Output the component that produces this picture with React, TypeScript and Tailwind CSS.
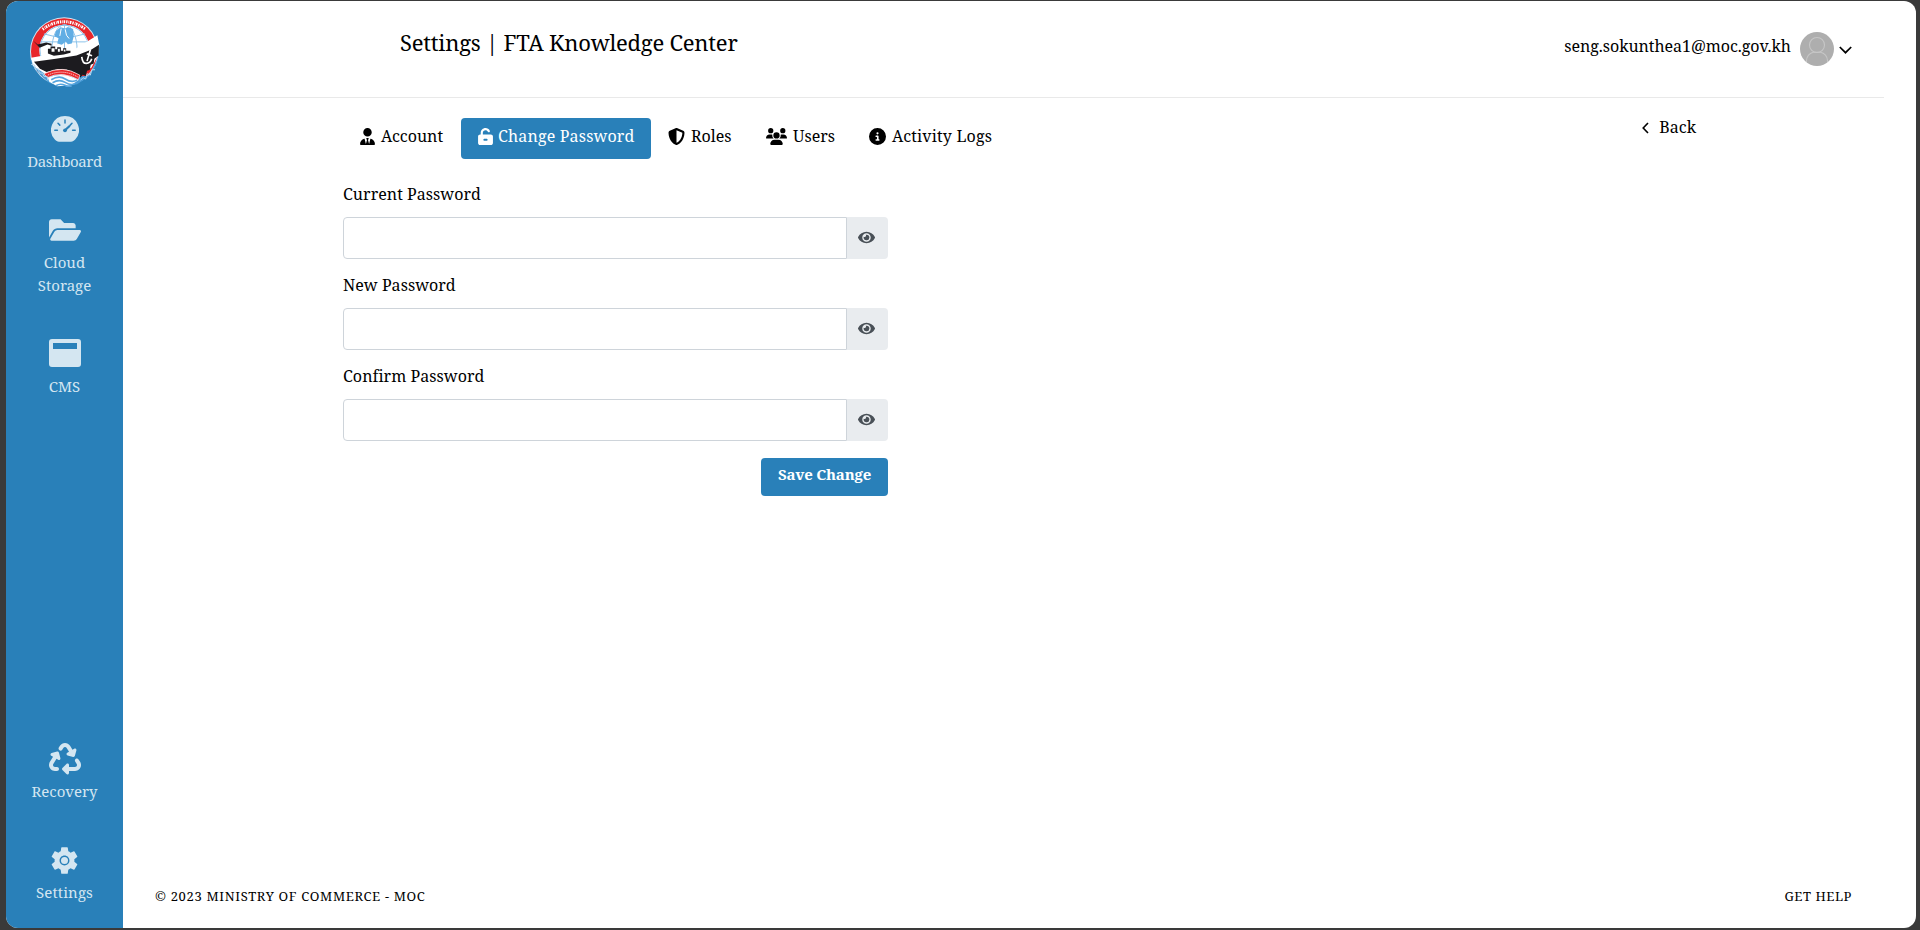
import type { ReactNode } from 'react';
import { FaUserTie, FaUnlockKeyhole, FaShieldHalved, FaUsers, FaCircleInfo, FaRecycle } from 'react-icons/fa6';
import { FaEye, FaFolderOpen } from 'react-icons/fa';
import { MdSettings } from 'react-icons/md';

function Logo() {
  return (
    <svg viewBox="27 20 214 214" className="h-[71px] w-[71px]">
      <circle cx="133" cy="127" r="103" fill="#d3e7f5" />
      <circle cx="133" cy="127" r="100" fill="#e8262a" />
      <circle cx="134" cy="122" r="76" fill="#fff" />
      <g fill="none" stroke="#8cc3ea" strokeWidth="3">
        <ellipse cx="134" cy="122" rx="38" ry="76" />
        <path d="M134 46v80M62 98h144M72 74q62 20 124 0" />
        <circle cx="134" cy="122" r="74" />
      </g>
      <path d="M108 66l14-12 14 4 8-5 16 6 2 22-6 22-12 2-6-8-12 10-14-4 4-16-12-6z" fill="#62aee4" />
      <path d="M136 60l4 18 8 10M124 58l-4 22" fill="none" stroke="#fff" strokeWidth="3" />
      <path d="M68 60q64-46 130 0" fill="none" stroke="#fff" strokeWidth="9" strokeDasharray="4 3 2 2 5 3" />
      <path d="M30 150l14 26 16 20 28 26 40 8 44-4 36-24 20-32 10-30-30 60-70 4z" fill="#4a9cd8" />
      <path d="M33 146l60-11 62-9 78-48 6 30-4 30-20 38-60 22-80-4-36-24z" fill="#fff" />
      <path d="M42 158l66-9 62-10 44-17 24-15-1 32-13 10-2 14-9 4-3 16-8 2-4 16-9-4-7 8-16-14-26-10-26-1-34 9-20-10z" fill="#1c1b1f" />
      <path d="M212 122l-10 34M201 134l16 6M186 143q2 20 14 20 12-1 16-14" fill="none" stroke="#fff" strokeWidth="5" />
      <path d="M39 94l14 12 26-6 16 4v6l-12-4-24 10z" fill="#1c1b1f" />
      <path d="M84 133v-14h8v-7h14v8h6v-6h11v11h7v-8h9v8h13v6l-20 5-30 4z" fill="#1c1b1f" />
      <path d="M95 117h9v11h-9zM114 119h6v9h-6zM132 121h5v6h-5z" fill="#fff" />
      <path d="M72 194q56-28 108 4l-4 14q-50-28-94-6z" fill="#e8262a" stroke="#fff" strokeWidth="2" />
      <path d="M84 198q46-20 90 6" fill="none" stroke="#fff" strokeWidth="3" strokeDasharray="3 3" />
      <path d="M84 206q44-20 92 7l-22 16-42 3-24-14z" fill="#fff" />
      <g fill="none" stroke="#56a5de" strokeWidth="5">
        <path d="M94 212q24-14 42-2t36 4" />
        <path d="M98 221q20-12 38-1t30 3" />
        <path d="M108 230q14-8 27-1t20 1" />
      </g>
      <path d="M34 166l10 2 2 12 10 0 2 12 10 0 4 10 10 0 2 12" fill="none" stroke="#b9daf0" strokeWidth="3" />
      <path d="M182 214l8-8 8 4 4-16 10 4 4-16 10 0" fill="none" stroke="#b9daf0" strokeWidth="3" />
    </svg>
  );
}

function GaugeIcon() {
  return (
    <svg viewBox="0 0 28 26" className="h-[26px] w-[28px]">
      <path d="M14 0a14 14 0 0 0-10.4 23.3c1.4 1.6 2.7 2.4 4.4 2.4h12c1.700 0 3-.8 4.400-2.400A14 14 0 0 0 14 0z" fill="#d4e6f1" />
      <g stroke="#2980b9" strokeWidth="1.500" strokeLinecap="round" fill="none">
        <path d="M14 4v3M7 7.300l1.800 1.800M21 7.300l-1.800 1.800M3.800 14.300h2.600M21.600 14.300h2.600" />
        <path d="M14 14.300l4.300-4.100" strokeWidth="2.200" />
      </g>
      <circle cx="14" cy="14.300" r="1.900" fill="#2980b9" />
    </svg>
  );
}

function WindowIcon() {
  return (
    <svg viewBox="0 0 32 28" className="h-[28px] w-[32px]">
      <path fillRule="evenodd" d="M3 0h26a3 3 0 0 1 3 3v22a3 3 0 0 1-3 3H3a3 3 0 0 1-3-3V3a3 3 0 0 1 3-3zM4 4v6h24V4z" fill="#d4e6f1" />
    </svg>
  );
}

function GearIcon() {
  return (
    <span className="grid place-items-center">
      <MdSettings size={33} className="col-start-1 row-start-1" />
      <span className="col-start-1 row-start-1 h-[7px] w-[7px] rounded-full bg-[#d4e6f1]" />
    </span>
  );
}

function NavItem({ icon, children, className }: { icon: ReactNode; children: ReactNode; className: string }) {
  return (
    <a className={`flex w-full flex-col items-center text-center text-[15px] leading-[23px] text-[#d4e6f1] ${className}`}>
      <span className="flex h-8 items-center justify-center">{icon}</span>
      {children}
    </a>
  );
}

function Tab({ icon, label, className }: { icon: ReactNode; label: string; className: string }) {
  return (
    <a className={`flex h-[41px] items-start rounded pt-[6px] leading-6 ${className}`}>
      <span className="flex h-6 items-center">{icon}</span>
      <span className="whitespace-nowrap">{label}</span>
    </a>
  );
}

function PasswordField({ label }: { label: string }) {
  return (
    <div className="flex h-[91px] flex-col">
      <label className="h-[34px] leading-[23px] tracking-[0.04px]">{label}</label>
      <div className="flex h-[42px]">
        <input type="password" className="min-w-0 flex-1 rounded-l border border-[#ced4da] bg-white px-3 outline-none" />
        <button className="flex w-[41px] items-center justify-center rounded-r bg-[#e9ecef] pr-[2px] pb-[2px] text-[#495057]">
          <FaEye size={17} />
        </button>
      </div>
    </div>
  );
}

export default function App() {
  return (
    <div className="h-[930px] w-[1920px] bg-[#3a3a3a] pt-px pr-[4px] pb-[2px] pl-[6px] font-['Noto_Serif','DejaVu_Serif_Condensed','DejaVu_Serif',serif] text-base text-black">
      <div className="flex h-[927px] overflow-hidden rounded-[12px] bg-white">
        <aside className="flex w-[117px] shrink-0 flex-col items-center bg-[#2980b9] pt-[15px]">
          <Logo />
          <NavItem icon={<GaugeIcon />} className="mt-[26px] tracking-[-0.4px]">
            <span className="mt-[5px]">Dashboard</span>
          </NavItem>
          <NavItem icon={<FaFolderOpen size={32} />} className="mt-[41px]">
            <span className="mt-[5px]">Cloud</span>
            <span>Storage</span>
          </NavItem>
          <NavItem icon={<WindowIcon />} className="mt-[40px]">
            <span className="mt-[6px]">CMS</span>
          </NavItem>
          <NavItem icon={<FaRecycle size={32} />} className="mt-auto">
            <span className="mt-[5px]">Recovery</span>
          </NavItem>
          <NavItem icon={<GearIcon />} className="mt-[41px] mb-[24px] tracking-[0.1px]">
            <span className="mt-[5px]">Settings</span>
          </NavItem>
        </aside>

        <main className="flex flex-1 flex-col">
          <header className="mr-[32px] flex h-[97px] items-start justify-between border-b border-[#e9e9e9] pl-[277px]">
            <h1 className="mt-[25px] text-[22px] leading-8 tracking-[-0.22px]">Settings | FTA Knowledge Center</h1>
            <div className="mt-[31px] mr-[32px] flex h-[34px] items-center">
              <span className="mr-[9px] -mt-[6px] tracking-[-0.04px]">seng.sokunthea1@moc.gov.kh</span>
              <svg viewBox="0 0 34 34" className="h-[34px] w-[34px] rounded-full bg-[#aeaeae]" fill="none" stroke="#c6c6c6" strokeWidth="1.100">
                <circle cx="17" cy="13" r="7.500" />
                <path d="M6.500 30v-1.500a8.500 8.500 0 0 1 7-8.200h7a8.500 8.500 0 0 1 7 8.200V30" />
              </svg>
              <svg viewBox="0 0 13 8" className="ml-[5px] mt-[2px] h-[8px] w-[13px]" fill="none" stroke="#000" strokeWidth="1.700">
                <path d="M.8 1l5.700 5.700L12.200 1" />
              </svg>
            </div>
          </header>

          <div className="flex items-start pl-[220px] pt-[20px]">
            <nav className="flex">
              <Tab icon={<FaUserTie size={17} />} label="Account" className="w-[118px] gap-[5px] pl-[16px]" />
              <Tab icon={<FaUnlockKeyhole size={17} />} label="Change Password" className="w-[190px] gap-[4px] bg-[#2980b9] pl-[16px] tracking-[0.16px] text-white" />
              <Tab icon={<FaShieldHalved size={17} />} label="Roles" className="w-[98px] gap-[6px] pl-[17px]" />
              <Tab icon={<FaUsers size={21} />} label="Users" className="w-[102px] gap-[6px] pl-[17px]" />
              <Tab icon={<FaCircleInfo size={17} />} label="Activity Logs" className="gap-[6px] pl-[18px] tracking-[0.18px]" />
            </nav>
            <a className="ml-auto mr-[220px] flex items-center gap-[10px] leading-[18px]">
              <svg viewBox="0 0 7 12" className="mt-px h-[12px] w-[7px]" fill="none" stroke="#000" strokeWidth="1.600">
                <path d="M6 1L1.200 6 6 11" />
              </svg>
              Back
            </a>
          </div>

          <form className="ml-[220px] mt-[24px] flex w-[545px] flex-col">
            <PasswordField label="Current Password" />
            <PasswordField label="New Password" />
            <PasswordField label="Confirm Password" />
            <button type="button" className="mt-[2px] flex h-[38px] w-[127px] items-start justify-center self-end rounded bg-[#2980b9] pt-[4px] text-[15px] font-bold leading-6 tracking-[-0.2px] text-white">
              Save Change
            </button>
          </form>

          <footer className="mt-auto mb-[22px] ml-[32px] mr-[64px] flex justify-between text-[13px] leading-5">
            <span className="tracking-[0.66px]">© 2023 MINISTRY OF COMMERCE - MOC</span>
            <span className="tracking-[0.56px]">GET HELP</span>
          </footer>
        </main>
      </div>
    </div>
  );
}
